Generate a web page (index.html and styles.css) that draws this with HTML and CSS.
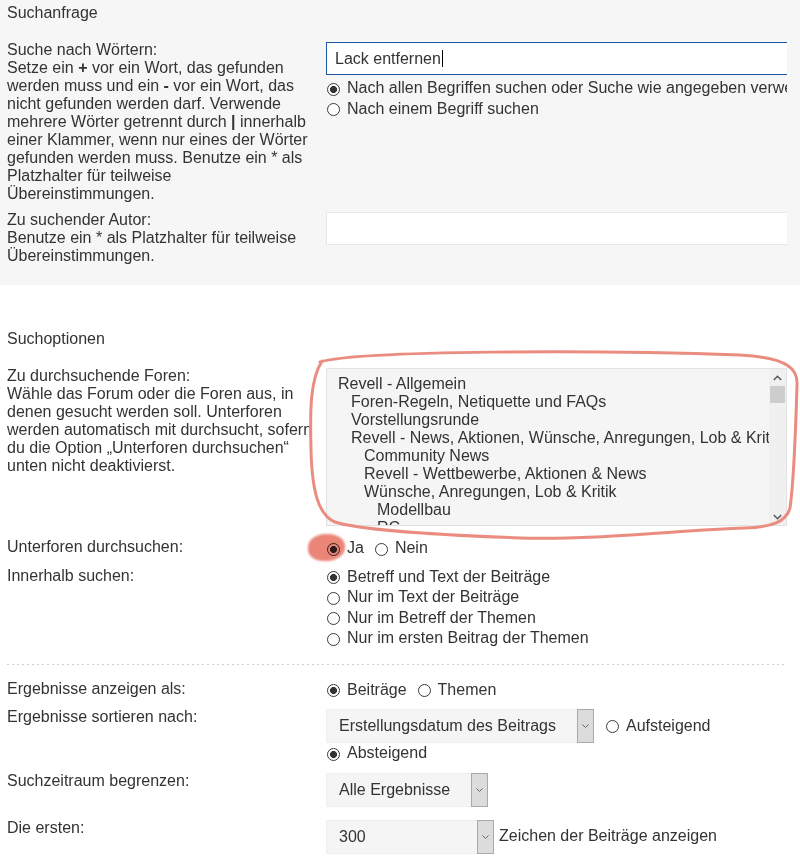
FILE: index.html
```html
<!DOCTYPE html>
<html lang="de">
  <head>
    <meta charset="UTF-8" />
    <meta name="viewport" content="width=device-width, initial-scale=1.0" />
    <title>Suche</title>

    <link rel="stylesheet" href="styles.css">
  </head>
  <body>
    <div class="page">
      <section class="panel panel-query">
        <h3 class="panel-title">Suchanfrage</h3>

        <div class="row">
          <div class="label">
            Suche nach Wörtern:<br>
            Setze ein <b>+</b> vor ein Wort, das gefunden werden muss und ein <b>-</b> vor ein Wort, das nicht gefunden werden darf. Verwende mehrere Wörter getrennt durch <b>|</b> innerhalb einer Klammer, wenn nur eines der Wörter gefunden werden muss. Benutze ein * als Platzhalter für teilweise Übereinstimmungen.
          </div>
          <div class="field">
            <div class="input is-focused">Lack entfernen<span class="caret"></span></div>
            <div class="radio-list radio-list-terms">
              <label class="opt"><span class="radio is-checked"></span>Nach allen Begriffen suchen oder Suche wie angegeben verwenden</label>
              <label class="opt"><span class="radio"></span>Nach einem Begriff suchen</label>
            </div>
          </div>
        </div>

        <div class="row">
          <div class="label">
            Zu suchender Autor:<br>
            Benutze ein * als Platzhalter für teilweise Übereinstimmungen.
          </div>
          <div class="field">
            <div class="input"></div>
          </div>
        </div>
      </section>

      <section class="panel panel-options">
        <h3 class="panel-title">Suchoptionen</h3>

        <div class="row">
          <div class="label">
            Zu durchsuchende Foren:<br>
            Wähle das Forum oder die Foren aus, in denen gesucht werden soll. Unterforen werden automatisch mit durchsucht, sofern du die Option „Unterforen durchsuchen“ unten nicht deaktivierst.
          </div>
          <div class="field">
            <div class="listbox">
              <ul class="listbox-items">
                <li class="lvl-0">Revell - Allgemein</li>
                <li class="lvl-1">Foren-Regeln, Netiquette und FAQs</li>
                <li class="lvl-1">Vorstellungsrunde</li>
                <li class="lvl-1">Revell - News, Aktionen, Wünsche, Anregungen, Lob &amp; Kritik</li>
                <li class="lvl-2">Community News</li>
                <li class="lvl-2">Revell - Wettbewerbe, Aktionen &amp; News</li>
                <li class="lvl-2">Wünsche, Anregungen, Lob &amp; Kritik</li>
                <li class="lvl-3">Modellbau</li>
                <li class="lvl-3">RC</li>
              </ul>
              <div class="scrollbar">
                <span class="sb-arrow">
                  <svg width="9" height="6" viewBox="0 0 9 6"><polyline points="0.8,5 4.5,1.2 8.2,5" fill="none" stroke="#555" stroke-width="1.4"/></svg>
                </span>
                <span class="sb-thumb"></span>
                <span class="sb-track"></span>
                <span class="sb-arrow">
                  <svg width="9" height="6" viewBox="0 0 9 6"><polyline points="0.8,1 4.5,4.8 8.2,1" fill="none" stroke="#555" stroke-width="1.4"/></svg>
                </span>
              </div>
            </div>
          </div>
        </div>

        <div class="row">
          <div class="label">Unterforen durchsuchen:</div>
          <div class="field field-marked">
            <div class="opts-inline">
              <label class="opt"><span class="radio is-checked"></span>Ja</label>
              <label class="opt"><span class="radio"></span>Nein</label>
            </div>
            <span class="marker"></span>
          </div>
        </div>

        <div class="row">
          <div class="label">Innerhalb suchen:</div>
          <div class="field">
            <div class="radio-list">
              <label class="opt"><span class="radio is-checked"></span>Betreff und Text der Beiträge</label>
              <label class="opt"><span class="radio"></span>Nur im Text der Beiträge</label>
              <label class="opt"><span class="radio"></span>Nur im Betreff der Themen</label>
              <label class="opt"><span class="radio"></span>Nur im ersten Beitrag der Themen</label>
            </div>
          </div>
        </div>

        <div class="divider"></div>

        <div class="row">
          <div class="label">Ergebnisse anzeigen als:</div>
          <div class="field">
            <div class="opts-inline">
              <label class="opt"><span class="radio is-checked"></span>Beiträge</label>
              <label class="opt"><span class="radio"></span>Themen</label>
            </div>
          </div>
        </div>

        <div class="row">
          <div class="label">Ergebnisse sortieren nach:</div>
          <div class="field">
            <div class="select-line">
              <div class="select select-sort">
                <span class="select-value">Erstellungsdatum des Beitrags</span>
                <span class="select-arrow"><svg width="7" height="4" viewBox="0 0 7 4"><polyline points="0.5,0.5 3.5,3.5 6.5,0.5" fill="none" stroke="#666" stroke-width="1"/></svg></span>
              </div>
              <label class="opt opt-after"><span class="radio"></span>Aufsteigend</label>
            </div>
            <label class="opt"><span class="radio is-checked"></span>Absteigend</label>
          </div>
        </div>

        <div class="row">
          <div class="label">Suchzeitraum begrenzen:</div>
          <div class="field">
            <div class="select select-time">
              <span class="select-value">Alle Ergebnisse</span>
              <span class="select-arrow"><svg width="7" height="4" viewBox="0 0 7 4"><polyline points="0.5,0.5 3.5,3.5 6.5,0.5" fill="none" stroke="#666" stroke-width="1"/></svg></span>
            </div>
          </div>
        </div>

        <div class="row">
          <div class="label">Die ersten:</div>
          <div class="field">
            <div class="select-line">
              <div class="select select-chars">
                <span class="select-value">300</span>
                <span class="select-arrow"><svg width="7" height="4" viewBox="0 0 7 4"><polyline points="0.5,0.5 3.5,3.5 6.5,0.5" fill="none" stroke="#666" stroke-width="1"/></svg></span>
              </div>
              <span class="select-note">Zeichen der Beiträge anzeigen</span>
            </div>
          </div>
        </div>
      </section>

      <!-- hand drawn highlight round the forum list -->
      <svg class="annotation" width="800" height="860" viewBox="0 0 800 860">
        <path d="M 320 362 C 360 350, 600 350, 740 355 C 790 358, 798 370, 797 385 C 796 420, 794 480, 790 508 C 786 522, 772 527, 745 528 C 680 530, 600 540, 520 538 C 440 535, 360 530, 335 522 C 318 515, 312 490, 311 450 C 310 410, 310 380, 322 361"
          fill="none" stroke="#eb8c80" stroke-width="3" stroke-linecap="round"/>
      </svg>
    </div>
  </body>
</html>
```

FILE: styles.css
```css
body {
  margin: 0;
  font-family: "Liberation Sans", Arial, sans-serif;
  font-size: 16px;
  line-height: 18px;
  color: #333;
  background: #fff;
}

.page {
  position: relative;
  width: 800px;
  height: 860px;
  overflow: hidden;
}

.annotation {
  position: absolute;
  left: 0;
  top: 0;
  pointer-events: none;
}

.panel {
  padding: 0 0 0 7px;
}

.panel-query {
  background: #f6f6f6;
  padding-top: 4px;
  padding-bottom: 20px;
}

.panel-options {
  padding-top: 45px;
}

.panel-title {
  margin: 0 0 19px;
  font-size: 16px;
  font-weight: normal;
  line-height: 18px;
}

.row {
  display: grid;
  grid-template-columns: 308px 461px;
  column-gap: 11px;
}

.row + .row {
  margin-top: 8px;
}

.label b {
  font-weight: bold;
}

.field {
  overflow: hidden;
  min-width: 0;
}

.input {
  box-sizing: border-box;
  width: calc(100% + 20px);
  height: 33px;
  margin-top: 1px;
  padding-left: 8px;
  line-height: 31px;
  border: 1px solid #e7e7e7;
  background: #fff;
  white-space: nowrap;
}

.input.is-focused {
  border-color: #1f56a3;
}

.caret {
  display: inline-block;
  width: 1px;
  height: 17px;
  margin-left: 1px;
  vertical-align: -3px;
  background: #000;
}

.radio-list-terms {
  margin-top: 3px;
}

.opt {
  display: flex;
  align-items: center;
  gap: 7px;
  height: 20.5px;
  white-space: nowrap;
}

.radio {
  flex: none;
  box-sizing: border-box;
  width: 13px;
  height: 13px;
  margin: 2px 0 0 1px;
  border: 1px solid #3a3a3a;
  border-radius: 50%;
  background: #fff;
}

.radio.is-checked {
  background: radial-gradient(circle, #333 0 3.2px, #fff 3.8px);
}

.opts-inline {
  display: flex;
  gap: 10px;
}

/* forum list */
.listbox {
  display: flex;
  box-sizing: border-box;
  height: 158px;
  margin: 1px 0 4px;
  border: 1px solid #e2e2e2;
  background: #f5f5f5;
}

.listbox-items {
  flex: 1;
  min-width: 0;
  margin: 0;
  padding: 6px 0 0 11px;
  list-style: none;
  overflow: hidden;
  white-space: nowrap;
}

.lvl-1 { padding-left: 13px; }
.lvl-2 { padding-left: 26px; }
.lvl-3 { padding-left: 39px; }

.scrollbar {
  display: flex;
  flex-direction: column;
  width: 17px;
  background: #f0f0f0;
}

.sb-arrow {
  display: flex;
  align-items: center;
  justify-content: center;
  height: 17px;
}

.sb-thumb {
  height: 17px;
  margin: 0 1px;
  background: #cdcdcd;
}

.sb-track {
  flex: 1;
}

/* red marker over the "Ja" option */
.field-marked {
  position: relative;
  overflow: visible;
}

.marker {
  position: absolute;
  left: -18px;
  top: -4px;
  width: 37px;
  height: 27px;
  border-radius: 48% 45% 50% 42%;
  background: #ea8577;
  mix-blend-mode: multiply;
  filter: blur(0.8px);
}

.divider {
  width: 780px;
  height: 1px;
  margin: 15px 0;
  background: repeating-linear-gradient(to right, #cfcfcf 0 2px, transparent 2px 5px);
}

/* select boxes */
.select-line {
  display: flex;
  align-items: center;
}

.select {
  display: flex;
  box-sizing: border-box;
  height: 34px;
  margin: 1px 0 4px;
  border: 1px solid #efefef;
  background: #f5f5f5;
  white-space: nowrap;
}

.select-line .select {
  margin-bottom: 0;
}

.select-sort { width: 268px; }
.select-time { width: 162px; }
.select-chars { width: 168px; }

.select-value {
  flex: 1;
  padding-left: 12px;
  line-height: 32px;
}

.select-arrow {
  display: flex;
  align-items: center;
  justify-content: center;
  width: 15px;
  margin: -1px -1px -1px 0;
  border: 1px solid #a9a9a9;
  background: #dcdcdc;
}

.opt-after {
  margin-left: 11px;
}

.select-note {
  margin-left: 5px;
}
```
